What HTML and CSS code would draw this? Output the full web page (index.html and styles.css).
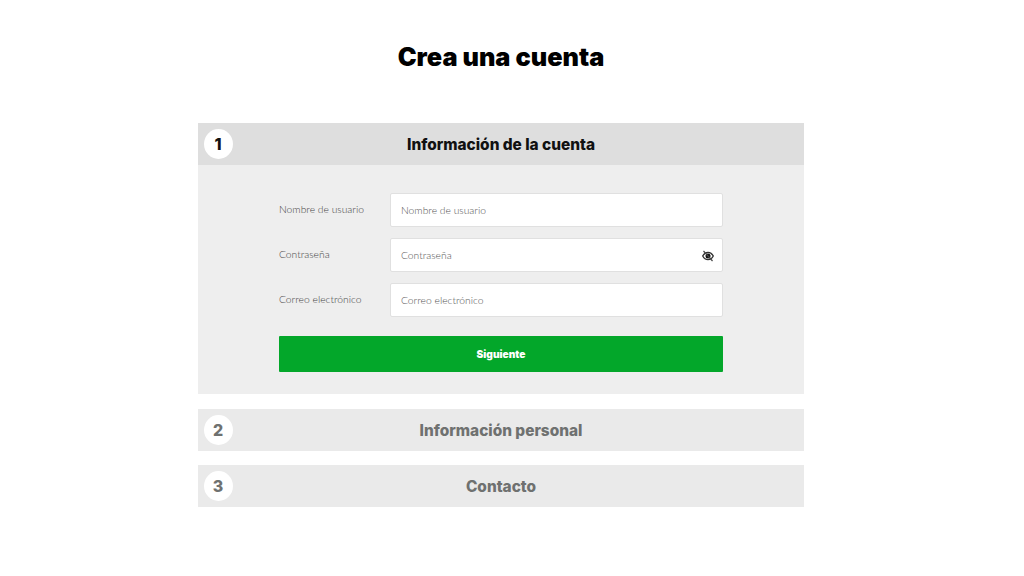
FILE: index.html
```html
<!DOCTYPE html>
<html lang="es">
<head>
  <meta charset="UTF-8" />
  <title>Crea una cuenta</title>
  <link rel="stylesheet" href="styles.css">
</head>
<body>
  <div class="container">
    <h1>Crea una cuenta</h1>

    <section class="step step-active">
      <div class="step-header">
        <span class="step-number">1</span>
        <h2>Información de la cuenta</h2>
      </div>
      <form class="step-body">
        <div class="field">
          <label for="user">Nombre de usuario</label>
          <div class="input-box">
            <input id="user" type="text" placeholder="Nombre de usuario">
          </div>
        </div>
        <div class="field">
          <label for="pass">Contraseña</label>
          <div class="input-box">
            <input id="pass" type="text" placeholder="Contraseña">
            <svg class="eye" viewBox="0 0 24 24" aria-hidden="true">
              <path d="M1.500 12C4 7 7.800 4.800 12 4.800s8 2.200 10.500 7.200c-2.500 5-6.300 7.200-10.500 7.200S4 17 1.500 12z" fill="#fff" stroke="#333" stroke-width="2.800"/>
              <circle cx="12" cy="12" r="5" fill="#111"/>
              <path d="M3 2l18 20" stroke="#444" stroke-width="2.400"/>
            </svg>
          </div>
        </div>
        <div class="field">
          <label for="mail">Correo electrónico</label>
          <div class="input-box">
            <input id="mail" type="text" placeholder="Correo electrónico">
          </div>
        </div>
        <button type="button" class="next-btn">Siguiente</button>
      </form>
    </section>

    <section class="step">
      <div class="step-header">
        <span class="step-number">2</span>
        <h2>Información personal</h2>
      </div>
    </section>

    <section class="step">
      <div class="step-header">
        <span class="step-number">3</span>
        <h2>Contacto</h2>
      </div>
    </section>
  </div>
</body>
</html>
```

FILE: styles.css
```css
body {
  font-family: Inter, "Liberation Sans", sans-serif;
  margin: 0;
  background: #fff;
  overflow: hidden;
}

.container {
  width: 606px;
  margin-left: 198px;
  padding-top: 41px;
}

h1 {
  height: 32px;
  margin: 0 0 50px;
  font-size: 25.300px;
  font-weight: 900;
  line-height: 32px;
  text-align: center;
  color: #000;
}

.step {
  margin-bottom: 14px;
}

.step-active {
  margin-bottom: 15px;
}

.step-header {
  position: relative;
  display: flex;
  align-items: center;
  justify-content: center;
  height: 42px;
  background: #eaeaea;
  color: #6f7170;
}

.step-active .step-header {
  background: #dedede;
  color: #111;
}

.step-header h2 {
  margin: 0;
  font-size: 15.400px;
  font-weight: 800;
}

.step-number {
  position: absolute;
  left: 5.500px;
  top: 6px;
  width: 29px;
  height: 30px;
  border-radius: 50%;
  background: #fff;
  font-size: 16px;
  font-weight: 800;
  line-height: 30px;
  text-align: center;
}

.step-body {
  display: flex;
  flex-direction: column;
  gap: 11px;
  padding: 28px 81px 22px;
  background: #eeeeee;
}

.field {
  display: flex;
  height: 34px;
}

.field label {
  width: 111px;
  padding-top: 8px;
  font-family: Lato, sans-serif;
  font-size: 10.300px;
  font-weight: 300;
  line-height: 16px;
  color: #444;
}

.input-box {
  display: flex;
  flex: 1;
  align-items: center;
  padding: 0 8px 0 10px;
  background: #fff;
  border: 1px solid #e0e0e0;
  border-radius: 2px;
  box-sizing: border-box;
}

.input-box input {
  flex: 1;
  min-width: 0;
  height: 16px;
  margin-top: -1px;
  padding: 0;
  border: none;
  outline: none;
  background: none;
  font-family: Lato, sans-serif;
  font-size: 10.300px;
  font-weight: 300;
}

.input-box input::placeholder {
  color: #555;
  opacity: 1;
}

.eye {
  width: 12px;
  height: 12px;
  margin-top: 2px;
}

.next-btn {
  height: 36px;
  margin-top: 8px;
  padding: 0;
  border: none;
  border-radius: 1px;
  background: #03a72a;
  color: #fff;
  font-family: Inter, sans-serif;
  font-size: 10.200px;
  font-weight: 900;
}
```
